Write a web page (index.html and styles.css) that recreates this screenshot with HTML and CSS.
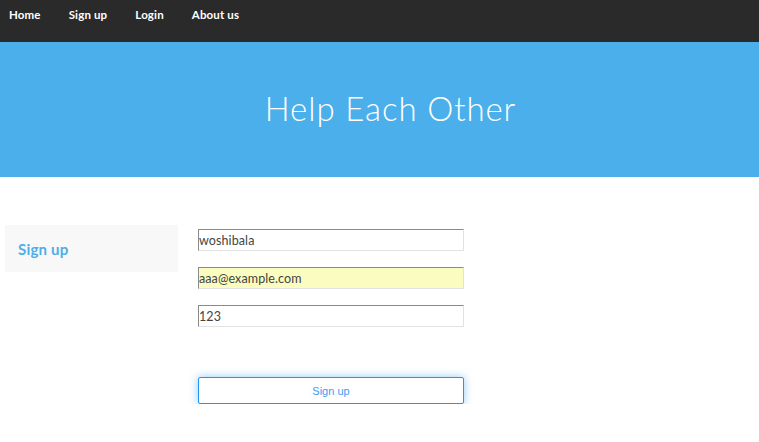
FILE: index.html
```html
<!DOCTYPE html>
<html>
<head>
<meta charset="utf-8">
<link rel="stylesheet" href="styles.css">
</head>
<body>
<nav class="topnav">
  <a href="#">Home</a>
  <a href="#">Sign up</a>
  <a href="#">Login</a>
  <a href="#">About us</a>
</nav>
<header class="hero">
  <h1>Help Each Other</h1>
</header>
<main class="content">
  <aside class="side">
    <h2>Sign up</h2>
  </aside>
  <form class="form">
    <input class="field" type="text" value="woshibala">
    <input class="field autofill" type="text" value="aaa@example.com">
    <input class="field" type="text" value="123">
    <button class="btn" type="button">Sign up</button>
  </form>
</main>
</body>
</html>
```
FILE: styles.css
```css
html, body {
  margin: 0;
  padding: 0;
  background: #fff;
  font-family: Lato, "Open Sans", sans-serif;
}
.topnav {
  height: 42px;
  background: #2a2a2a;
  display: flex;
  align-items: flex-start;
  padding: 8px 0 0 9px;
  box-sizing: border-box;
}
.topnav a {
  color: #fff;
  font-weight: 700;
  font-size: 11.5px;
  letter-spacing: 0.15px;
  text-decoration: none;
  margin-right: 28px;
  line-height: 14px;
}
.hero {
  height: 135px;
  background: #4aafea;
  display: flex;
  align-items: center;
  justify-content: center;
}
.hero h1 {
  margin: 0 0 0 22px;
  color: #fff;
  font-weight: 300;
  font-size: 33px;
  letter-spacing: 0.9px;
  padding-bottom: 4px;
}
.content {
  display: flex;
  align-items: flex-start;
  padding: 48px 0 0 5px;
}
.side {
  width: 173px;
  height: 47px;
  background: #f8f8f8;
  display: flex;
  align-items: center;
  padding-left: 13px;
  box-sizing: border-box;
}
.side h2 {
  margin: 0;
  color: #4aafea;
  font-size: 15px;
  font-weight: 700;
  letter-spacing: 0.2px;
}
.form {
  margin-left: 20px;
  width: 266px;
  display: flex;
  flex-direction: column;
  padding-top: 4px;
}
.field {
  height: 22px;
  box-sizing: border-box;
  border: 1px solid #e2e2e2;
  border-top-color: #8a8a8a;
  border-left-color: #8a8a8a;
  padding: 0;
  font-family: Lato, sans-serif;
  font-size: 12.5px;
  letter-spacing: 0.1px;
  color: #444;
  margin-bottom: 16px;
  background: #fff;
}
.field.autofill {
  background: #fafdbf;
}
.btn {
  margin-top: 34px;
  height: 27px;
  border: 1px solid #2196f3;
  border-radius: 2px;
  background: #fff;
  color: #3d9bf0;
  font-family: "Liberation Sans", Arial, sans-serif;
  font-size: 11px;
  box-shadow: 0 0 8px rgba(33, 150, 243, 0.5);
}
```
